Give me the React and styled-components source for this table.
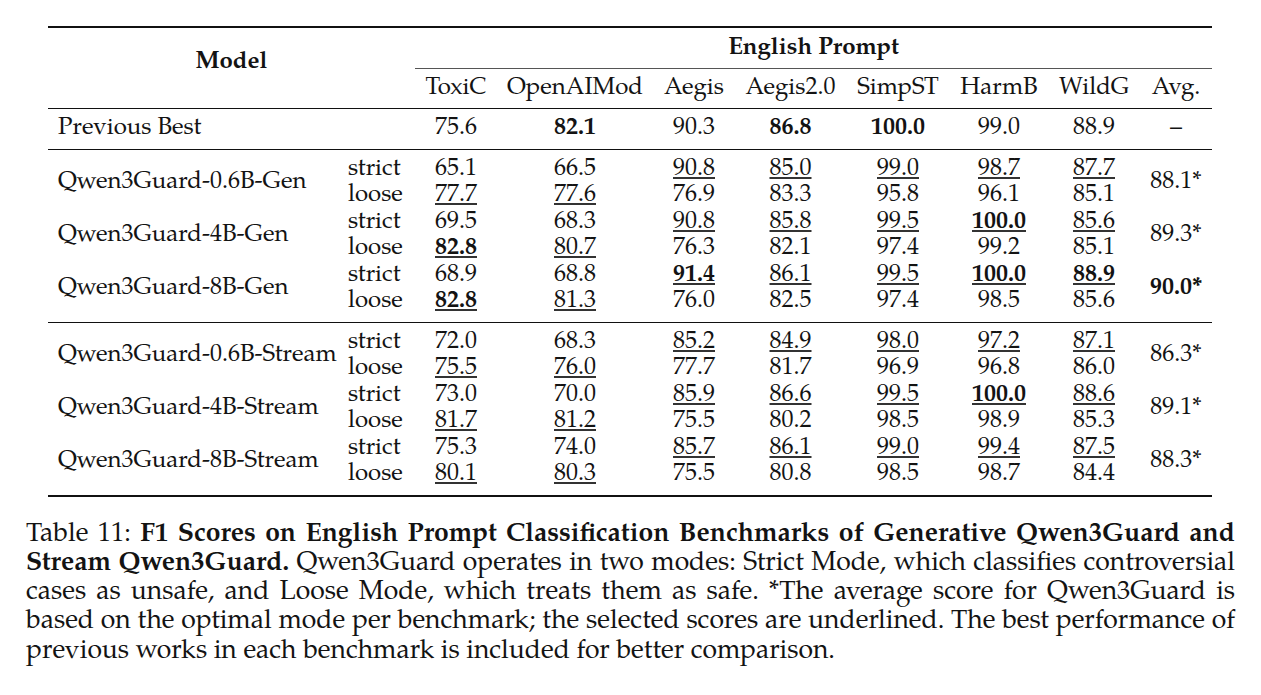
import styled, { createGlobalStyle } from 'styled-components';

const GlobalStyle = createGlobalStyle`
  html, body {
    margin: 0;
    padding: 0;
    background: #fff;
  }
  body {
    font-family: "TeX Gyre Pagella", "P052", "Liberation Serif", serif;
    color: #131313;
  }
`;

const Page = styled.div`
  width: 1261px;
  height: 695px;
  box-sizing: border-box;
  padding: 26px 0 0 26px;
`;

const Table = styled.table`
  margin-left: 22px;
  width: 1164px;
  table-layout: fixed;
  border-collapse: collapse;
  font-size: 24px;
  border-top: 2px solid #111;
  border-bottom: 2px solid #111;
`;

const Group = styled.tbody`
  border-top: 1.5px solid #111;
`;

const HeadCell = styled.th`
  font-weight: ${p => (p.$bold ? 700 : 400)};
  text-align: center;
  vertical-align: middle;
  padding: 0 0 ${p => p.$lift || 0}px;
  height: ${p => p.$h || 39}px;
  white-space: nowrap;
  border-bottom: ${p => (p.$rule ? '1px solid #555' : 'none')};
`;

const Row = styled.tr`
  height: ${p => p.$h || 26.5}px;
  line-height: ${p => p.$h || 26.5}px;
`;

const Spacer = styled.tr`
  height: 7px;
  td { padding: 0; }
`;

const NameCell = styled.td`
  padding: 0 0 0 10px;
  text-align: left;
  vertical-align: middle;
  white-space: nowrap;
`;

const ModeCell = styled.td`
  padding: 0 0 0 5px;
  text-align: left;
  white-space: nowrap;
`;

const NumCell = styled.td`
  padding: 0;
  text-align: center;
  vertical-align: middle;
  white-space: nowrap;
`;

const Num = styled.span`
  font-weight: ${p => (p.$bold ? 700 : 400)};
  text-decoration: ${p => (p.$under ? 'underline' : 'none')};
  text-decoration-color: #333;
  text-decoration-thickness: 1.5px;
  text-underline-offset: 2px;
`;

const Caption = styled.div`
  width: 1209px;
  margin-top: 24px;
  font-size: 26.5px;
  line-height: 29.3px;
`;

const CapLine = styled.div`
  white-space: nowrap;
  text-align: ${p => (p.$last ? 'left' : 'justify')};
  text-align-last: ${p => (p.$last ? 'left' : 'justify')};
`;

const widths = [295, 72, 82, 156, 82, 111, 104, 98, 92, 72];
const benchmarks = ['ToxiC', 'OpenAIMod', 'Aegis', 'Aegis2.0', 'SimpST', 'HarmB', 'WildG', 'Avg.'];

// "!" = bold, "_" = underlined
const groups = [
  [
    { name: 'Qwen3Guard-0.6B-Gen', avg: '88.1*',
      strict: ['65.1', '66.5', '_90.8', '_85.0', '_99.0', '_98.7', '_87.7'],
      loose: ['_77.7', '_77.6', '76.9', '83.3', '95.8', '96.1', '85.1'] },
    { name: 'Qwen3Guard-4B-Gen', avg: '89.3*',
      strict: ['69.5', '68.3', '_90.8', '_85.8', '_99.5', '!_100.0', '_85.6'],
      loose: ['!_82.8', '_80.7', '76.3', '82.1', '97.4', '99.2', '85.1'] },
    { name: 'Qwen3Guard-8B-Gen', avg: '!90.0*',
      strict: ['68.9', '68.8', '!_91.4', '_86.1', '_99.5', '!_100.0', '!_88.9'],
      loose: ['!_82.8', '_81.3', '76.0', '82.5', '97.4', '98.5', '85.6'] },
  ],
  [
    { name: 'Qwen3Guard-0.6B-Stream', avg: '86.3*',
      strict: ['72.0', '68.3', '_85.2', '_84.9', '_98.0', '_97.2', '_87.1'],
      loose: ['_75.5', '_76.0', '77.7', '81.7', '96.9', '96.8', '86.0'] },
    { name: 'Qwen3Guard-4B-Stream', avg: '89.1*',
      strict: ['73.0', '70.0', '_85.9', '_86.6', '_99.5', '!_100.0', '_88.6'],
      loose: ['_81.7', '_81.2', '75.5', '80.2', '98.5', '98.9', '85.3'] },
    { name: 'Qwen3Guard-8B-Stream', avg: '88.3*',
      strict: ['75.3', '74.0', '_85.7', '_86.1', '_99.0', '_99.4', '_87.5'],
      loose: ['_80.1', '_80.3', '75.5', '80.8', '98.5', '98.7', '84.4'] },
  ],
];

const previousBest = ['75.6', '!82.1', '90.3', '!86.8', '!100.0', '99.0', '88.9', '–'];

const Value = ({ v }) => {
  const bold = v.includes('!');
  const under = v.includes('_');
  return <Num $bold={bold} $under={under}>{v.replace(/[!_]/g, '')}</Num>;
};

const ModelRows = ({ model }) => (
  <>
    <Row>
      <NameCell rowSpan={2}>{model.name}</NameCell>
      <ModeCell>strict</ModeCell>
      {model.strict.map((v, i) => <NumCell key={i}><Value v={v} /></NumCell>)}
      <NumCell rowSpan={2}><Value v={model.avg} /></NumCell>
    </Row>
    <Row>
      <ModeCell>loose</ModeCell>
      {model.loose.map((v, i) => <NumCell key={i}><Value v={v} /></NumCell>)}
    </Row>
  </>
);

const App = () => (
  <Page>
    <GlobalStyle />
    <Table>
      <colgroup>
        {widths.map((w, i) => <col key={i} style={{ width: w }} />)}
      </colgroup>
      <thead>
        <tr>
          <HeadCell rowSpan={2} colSpan={2} $bold $lift={12}>Model</HeadCell>
          <HeadCell colSpan={8} $bold $h={40} $rule>English Prompt</HeadCell>
        </tr>
        <tr>
          {benchmarks.map(b => <HeadCell key={b}>{b}</HeadCell>)}
        </tr>
      </thead>
      <Group>
        <Row $h={40}>
          <NameCell colSpan={2}>Previous Best</NameCell>
          {previousBest.map((v, i) => <NumCell key={i}><Value v={v} /></NumCell>)}
        </Row>
      </Group>
      {groups.map((g, gi) => (
        <Group key={gi}>
          <Spacer><td colSpan={10} /></Spacer>
          {g.map(m => <ModelRows key={m.name} model={m} />)}
          <Spacer><td colSpan={10} /></Spacer>
        </Group>
      ))}
    </Table>
    <Caption>
      <CapLine>Table 11: <b>F1 Scores on English Prompt Classification Benchmarks of Generative Qwen3Guard and</b></CapLine>
      <CapLine><b>Stream Qwen3Guard.</b> Qwen3Guard operates in two modes: Strict Mode, which classifies controversial</CapLine>
      <CapLine>cases as unsafe, and Loose Mode, which treats them as safe. *The average score for Qwen3Guard is</CapLine>
      <CapLine>based on the optimal mode per benchmark; the selected scores are underlined. The best performance of</CapLine>
      <CapLine $last>previous works in each benchmark is included for better comparison.</CapLine>
    </Caption>
  </Page>
);

export default App;
